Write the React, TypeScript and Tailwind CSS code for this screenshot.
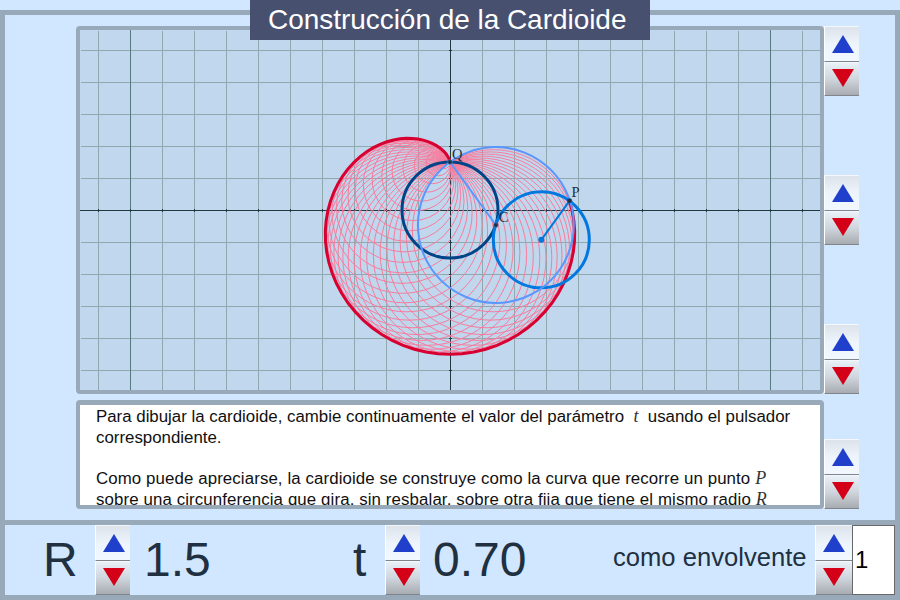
const UNIT = 32;
const OX = 370;
const OY = 180;
const W = 740;
const H = 360;
const R = 1.5 * UNIT;
const T = 0.7;

// Point on the base circle reached after turning a fraction t counterclockwise from the top.
function contact(t: number) {
  const a = Math.PI / 2 + 2 * Math.PI * t;
  return { x: Math.cos(a), y: -Math.sin(a) };
}

// Reflection of Q across the tangent line at the contact point.
function tracer(t: number) {
  const n = contact(t);
  const k = 2 * R * (1 + n.y);
  return { x: OX + k * n.x, y: OY - R + k * n.y };
}

function Plot() {
  const xs = Array.from({ length: 23 }, (_, i) => i - 11);
  const ys = Array.from({ length: 11 }, (_, i) => i - 5);
  const steps = Array.from({ length: 36 }, (_, i) => i * 0.02);
  const trace = Array.from({ length: 71 }, (_, i) => tracer(i * 0.01));
  const n = contact(T);
  const c = { x: OX + 0.2 + R * n.x, y: OY + 0.2 + R * n.y };
  const m = { x: OX + 2 * R * n.x, y: OY + 0.2 + 2 * R * n.y };
  const p = tracer(T);
  const q = { x: OX, y: OY - R };
  const radius = Math.hypot(c.x - q.x, c.y - q.y);
  return (
    <svg width={W} height={H} className="block bg-[#c0d7ee]">
      <g transform="translate(0.5 0.5)" shapeRendering="crispEdges" strokeWidth={1}>
        {xs.map((i) => (
          <line key={i} x1={OX + i * UNIT} x2={OX + i * UNIT} y1={0} y2={H} stroke="#90a9ae" />
        ))}
        {ys.map((i) => (
          <line key={i} x1={0} x2={W} y1={OY + i * UNIT} y2={OY + i * UNIT} stroke="#90a9ae" />
        ))}
        {[-10, 10].map((i) => (
          <line key={i} x1={OX + i * UNIT} x2={OX + i * UNIT} y1={-1} y2={H} stroke="#587880" />
        ))}
        <path d={`M-1 ${OY}H${W}M${OX} -1V${H}`} stroke="#203a40" />
        {xs.map((i) => (
          <line key={i} x1={OX + i * UNIT} x2={OX + i * UNIT} y1={OY - 1.5} y2={OY + 1.5} stroke="#203a40" />
        ))}
        {ys.map((i) => (
          <line key={i} x1={OX - 1.5} x2={OX + 1.5} y1={OY + i * UNIT} y2={OY + i * UNIT} stroke="#203a40" />
        ))}
      </g>
      <g fill="none">
        <g stroke="#f87c9c" strokeWidth={1}>
          {steps.map((t) => {
            const s = contact(t);
            return <circle key={t} cx={OX + R * s.x} cy={OY + 0.3 + R * s.y} r={2 * R * Math.abs(Math.sin(Math.PI * t))} />;
          })}
        </g>
        <polyline points={trace.map((v) => `${v.x},${v.y + 0.3}`).join(" ")} stroke="#d80030" strokeWidth={3} />
        <circle cx={OX} cy={OY} r={R} stroke="#004488" strokeWidth={3} />
        <circle cx={m.x} cy={m.y} r={R} stroke="#0078e0" strokeWidth={3} />
        <circle cx={c.x} cy={c.y} r={radius} stroke="#5898ff" strokeWidth={2} />
        <path d={`M${c.x} ${c.y}L${q.x} ${q.y}`} stroke="#5898ff" strokeWidth={2} />
        <path d={`M${m.x} ${m.y}L${p.x} ${p.y}`} stroke="#0078e0" strokeWidth={2} />
      </g>
      <circle cx={m.x} cy={m.y} r={3} fill="#0078e0" />
      {[q, c, p].map((v, i) => (
        <circle key={i} cx={v.x} cy={v.y} r={2.3} fill="#203040" stroke={i === 2 ? "#0058a8" : "#4080d0"} strokeWidth={0.6} />
      ))}
      <g className="font-['Liberation_Serif',serif] text-[14.5px]" fill="#203038">
        <text x={q.x + 2} y={q.y - 3.5}>Q</text>
        <text x={c.x + 3} y={c.y - 3.5}>C</text>
        <text x={p.x + 2} y={p.y - 3.5}>P</text>
      </g>
    </svg>
  );
}

function Stepper({ wide = false }: { wide?: boolean }) {
  const face = "flex border-l border-t border-b border-l-white border-t-[#f4f8fc] border-b-[#80858c] pl-[7px]";
  return (
    <div className={wide ? "w-[37px] shrink-0" : "w-[35px] shrink-0"}>
      <div className={`${face} h-9 bg-linear-to-b from-[#dce3eb] via-[#edf4fc] to-[#f1f8ff]`}>
        <svg width="22" height="33" className="shrink-0"><path d="M11 8L22 26H0Z" fill="#2040cc" /></svg>
      </div>
      <div className={`${face} h-[34px] bg-linear-to-b from-[#e8f0f8] via-[#d0d6dd] to-[#a8acb2]`}>
        <svg width="22" height="32" className="shrink-0"><path d="M0 6H22L11 24Z" fill="#d40018" /></svg>
      </div>
    </div>
  );
}

function Variable({ children }: { children: string }) {
  return <span className="font-['Liberation_Serif',serif] text-[18px] tracking-normal text-[#333] italic">{children}</span>;
}

export default function App() {
  return (
    <div className="relative h-[600px] w-[900px] overflow-hidden bg-[#d0e7ff] pt-[10px] font-['Liberation_Sans',Arial,sans-serif]">
      <div className="flex h-[590px] flex-col border-[5px] border-[#98a9b9]">
        <main className="flex h-[505px] pl-[71px] pt-[11px]">
          <div className="flex w-[748px] flex-col gap-[6px]">
            <div className="h-[368px] overflow-hidden rounded-[4px] border-4 border-[#98a9b9]">
              <Plot />
            </div>
            <div className="h-[109px] overflow-hidden rounded-[4px] border-4 border-t-[5px] border-[#98a9b9] bg-white pl-4 pt-[1px] text-[16.85px] leading-[21px] whitespace-pre text-[#101010]">
              <p className="h-[21px]">Para dibujar la cardioide, cambie continuamente el valor del parámetro  <Variable>t</Variable>  usando el pulsador</p>
              <p className="h-[21px]">correspondiente.</p>
              <p className="h-5"> </p>
              <p className="h-[21px] tracking-[0.1px]">Como puede apreciarse, la cardioide se construye como la curva que recorre un punto <Variable>P</Variable></p>
              <p className="h-[21px] tracking-[0.11px]">sobre una circunferencia que gira, sin resbalar, sobre otra fija que tiene el mismo radio <Variable>R</Variable></p>
            </div>
          </div>
          <div className="flex h-[483px] flex-col">
            <div className="flex h-[368px] flex-col justify-between">
              <Stepper />
              <Stepper />
              <Stepper />
            </div>
            <div className="mt-[45px]">
              <Stepper />
            </div>
          </div>
        </main>
        <footer className="flex h-[75px] items-start border-t-[5px] border-[#98a9b9] text-[48px] leading-[70px] text-[#203040]">
          <span className="w-[90px] pl-[38px]">R</span>
          <Stepper />
          <span className="w-[223px] pl-[14px]">1.5</span>
          <span className="w-[32px]">t</span>
          <Stepper />
          <span className="w-[193px] pl-[13px]">0.70</span>
          <span className="w-[202px] text-[25.6px] leading-[65px] whitespace-nowrap">como envolvente</span>
          <Stepper wide />
          <div className="h-[70px] w-[43px] border border-[#686868] bg-white pl-[2px] text-[24px] leading-[68px] text-black">1</div>
        </footer>
      </div>
      <h1 className="absolute left-[250px] top-0 h-10 w-[400px] bg-[#485070] pl-[18px] text-[28px] leading-[39px] tracking-[-0.04px] whitespace-nowrap text-white">
        Construcción de la Cardioide
      </h1>
    </div>
  );
}
